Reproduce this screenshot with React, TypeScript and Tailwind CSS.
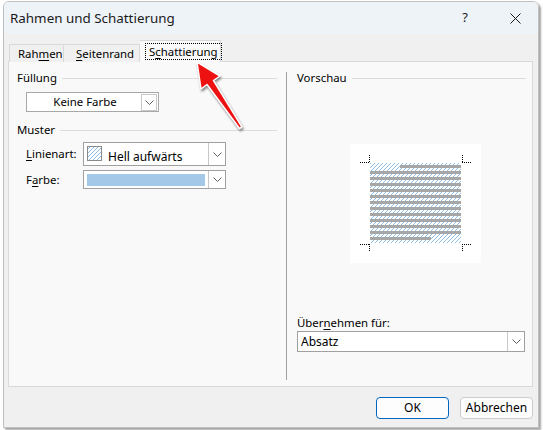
import React from 'react';

const font = { fontFamily: '"Noto Sans", "Open Sans", sans-serif' };

function Chevron() {
  return (
    <svg width="9" height="5" viewBox="0 0 9 5" className="block">
      <path d="M0.5 0.5 L4.5 4.5 L8.5 0.5" fill="none" stroke="#606060" strokeWidth="1" />
    </svg>
  );
}

// light upward diagonal, drawn pixel by pixel so it stays crisp
function Hatch({ id }: { id: string }) {
  return (
    <pattern id={id} patternUnits="userSpaceOnUse" width="4" height="4">
      <rect x="3" y="0" width="1" height="1" fill="#8dbde9" />
      <rect x="2" y="1" width="1" height="1" fill="#8dbde9" />
      <rect x="1" y="2" width="1" height="1" fill="#8dbde9" />
      <rect x="0" y="3" width="1" height="1" fill="#8dbde9" />
    </pattern>
  );
}

function SectionHeader({ label }: { label: string }) {
  return (
    <div className="flex items-center h-[16px]">
      <span className="leading-[16px]">{label}</span>
      <div className="flex-1 h-px bg-[#dcdcdc] ml-[5px] mt-[1px]" />
    </div>
  );
}

function Preview() {
  const lines = Array.from({ length: 13 }, (_, i) => i);
  return (
    <svg width="131" height="119" viewBox="0 0 131 119" className="block bg-white" shapeRendering="crispEdges">
      <defs>
        <Hatch id="hp" />
      </defs>
      <rect x="20" y="19" width="91" height="80" fill="url(#hp)" />
      {lines.map(i => {
        const y = 21 + i * 6;
        const x1 = i === 0 ? 50 : 20;
        const x2 = i === 12 ? 81 : 111;
        return <rect key={i} x={x1} y={y} width={x2 - x1} height="3" fill="#a6a6a6" />;
      })}
      <g stroke="#000" strokeWidth="1" strokeDasharray="1 1" fill="none">
        <path d="M10 18.5 H20 M19.5 11 V19" />
        <path d="M112 18.5 H122 M112.5 11 V19" />
        <path d="M10 100.5 H20 M19.5 100 V108" />
        <path d="M112 100.5 H122 M112.5 100 V108" />
      </g>
    </svg>
  );
}

export default function App() {
  return (
    <div className="relative w-[543px] h-[430px] bg-white overflow-hidden text-[11.4px] text-black" style={font}>
      {/* Dialog */}
      <div className="ml-[3px] mt-[1px] w-[536px] h-[427px] flex flex-col border border-[#bfbfbf] rounded-t-[6px] shadow-[2px_2px_2px_rgba(0,0,0,0.35)] overflow-hidden">
        {/* Title bar */}
        <div className="h-[32px] shrink-0 bg-[#eef3f8] flex items-center">
          <span className="pl-[6px] text-[#1a1a1a] text-[13.4px]">Rahmen und Schattierung</span>
          <span className="ml-auto text-[13px] text-[#1a1a1a] mr-[42px]">?</span>
          <svg width="11" height="11" viewBox="0 0 11 11" className="mr-[17px]">
            <path d="M0.5 0.5 L10.5 10.5 M10.5 0.5 L0.5 10.5" stroke="#1a1a1a" strokeWidth="1" />
          </svg>
        </div>

        {/* Body */}
        <div className="flex-1 bg-[#f0f0f0] flex flex-col">
          {/* Tabs */}
          <div className="flex items-end h-[22px] mt-[6px] ml-[5px] relative z-10 -mb-px">
            <div className="w-[55px] h-[18px] border border-b-0 border-[#d9d9d9] bg-[#f0f0f0] pl-[8px] flex items-center">
              <span>Rah<span className="underline underline-offset-2">m</span>en</span>
            </div>
            <div className="w-[76px] h-[18px] border border-l-0 border-b-0 border-[#d9d9d9] bg-[#f0f0f0] pl-[12px] flex items-center">
              <span><span className="underline underline-offset-2">S</span>eitenrand</span>
            </div>
            <div className="w-[81px] h-[22px] border border-l-0 border-b-0 border-[#d9d9d9] bg-[#f9f9f9] pl-[6px] pt-[3px] flex items-start">
              <span className="outline outline-1 outline-dotted outline-black px-[3px] leading-[15px]">
                S<span className="underline underline-offset-2">c</span>hattierung
              </span>
            </div>
          </div>

          {/* Panel */}
          <div className="ml-[4px] w-[525px] h-[326px] bg-[#f9f9f9] border border-[#d9d9d9] flex">
            {/* Left column */}
            <div className="w-[277px] shrink-0 pl-[8px] pr-[9px] pt-[8px] flex flex-col">
              <SectionHeader label="Füllung" />
              <div className="mt-[6px] ml-[9px] w-[133px] h-[20px] bg-white border border-[#a8a8a8] flex items-center">
                <span className="flex-1 text-center pl-[2px]">Keine Farbe</span>
                <div className="w-[16px] h-[17px] mr-px border border-[#c8c8c8] flex items-center justify-center">
                  <Chevron />
                </div>
              </div>

              <div className="mt-[10px]">
                <SectionHeader label="Muster" />
              </div>

              <div className="mt-[4px] flex items-center">
                <span className="w-[66px] shrink-0 pl-[9px]"><span className="underline underline-offset-2">L</span>inienart:</span>
                <div className="w-[143px] h-[24px] bg-white border border-[#a0a0a0] flex">
                  <div className="flex-1 flex items-start pl-[3px] pt-[3px]">
                    <svg width="15" height="15" viewBox="0 0 15 15" className="block shrink-0" shapeRendering="crispEdges">
                      <defs>
                        <Hatch id="hs" />
                      </defs>
                      <rect x="0.5" y="0.5" width="14" height="14" fill="url(#hs)" stroke="#8a8a8a" />
                    </svg>
                    <span className="ml-[6px] mt-[3px] leading-[16px] text-[12px]">Hell aufwärts</span>
                  </div>
                  <div className="w-[17px] border-l border-[#c8c8c8] flex items-center justify-center">
                    <Chevron />
                  </div>
                </div>
              </div>

              <div className="mt-[4px] flex items-center">
                <span className="w-[66px] shrink-0 pl-[9px]">F<span className="underline underline-offset-2">a</span>rbe:</span>
                <div className="w-[143px] h-[19px] bg-white border border-[#a0a0a0] flex">
                  <div className="flex-1 flex items-center pl-[3px]">
                    <div className="w-[118px] h-[12px] bg-[#a4c8e8]" />
                  </div>
                  <div className="w-[17px] border-l border-[#c8c8c8] flex items-center justify-center">
                    <Chevron />
                  </div>
                </div>
              </div>
            </div>

            {/* Separator */}
            <div className="w-px h-[308px] mt-[10px] bg-[#a0a0a0]" />

            {/* Right column */}
            <div className="flex-1 pt-[8px] pl-[10px] pr-[6px] flex flex-col">
              <SectionHeader label="Vorschau" />
              <div className="mt-[58px] ml-[53px]">
                <Preview />
              </div>
              <div className="mt-[52px] h-[16px] leading-[16px]">
                Über<span className="underline underline-offset-2">n</span>ehmen für:
              </div>
              <div className="w-[228px] h-[21px] bg-white border border-[#a0a0a0] flex">
                <span className="flex-1 pl-[3px] leading-[19px] text-[12px]">Absatz</span>
                <div className="w-[17px] border-l border-[#c8c8c8] flex items-center justify-center">
                  <Chevron />
                </div>
              </div>
            </div>
          </div>

          {/* Buttons */}
          <div className="mt-[10px] flex justify-end gap-[11px] pr-[5px]">
            <button className="w-[73px] h-[22px] bg-[#fdfdfd] border border-[#0067c0] rounded-[4px] text-[12px]">OK</button>
            <button className="w-[73px] h-[22px] bg-[#fdfdfd] border border-[#cccccc] rounded-[4px] text-[12px]">Abbrechen</button>
          </div>
        </div>
      </div>

      {/* Red annotation arrow */}
      <svg width="543" height="430" viewBox="0 0 543 430" className="absolute left-0 top-0 pointer-events-none drop-shadow-[1px_2px_1px_rgba(0,0,0,0.45)]">
        <polygon
          points="197,62 220,76 213.5,80.5 242,127 239.5,128.5 207,84.5 201,89"
          fill="#ee1111"
          stroke="#ffffff"
          strokeWidth="1.5"
          strokeLinejoin="round"
        />
      </svg>
    </div>
  );
}
